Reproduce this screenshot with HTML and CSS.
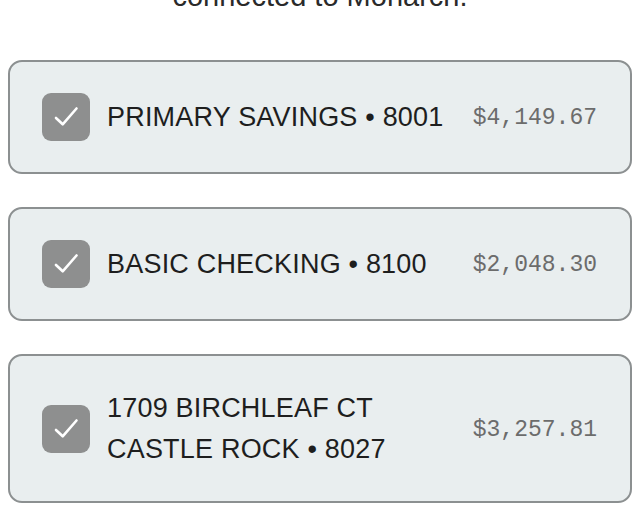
FILE: index.html
```html
<!DOCTYPE html>
<html>
<head>
<meta charset="utf-8">
<link rel="stylesheet" href="styles.css">
</head>
<body>
<div class="page">
  <p class="intro">connected to Monarch.</p>
  <div class="list">
    <div class="card">
      <span class="check"><svg viewBox="0 0 48 48" width="48" height="48"><polyline points="14,25 20.7,31.3 34.5,15.5" fill="none" stroke="#fff" stroke-width="2.6" stroke-linecap="round" stroke-linejoin="round"/></svg></span>
      <div class="name"><div>PRIMARY SAVINGS • 8001</div></div>
      <div class="amount">$4,149.67</div>
    </div>
    <div class="card">
      <span class="check"><svg viewBox="0 0 48 48" width="48" height="48"><polyline points="14,25 20.7,31.3 34.5,15.5" fill="none" stroke="#fff" stroke-width="2.6" stroke-linecap="round" stroke-linejoin="round"/></svg></span>
      <div class="name"><div>BASIC CHECKING • 8100</div></div>
      <div class="amount">$2,048.30</div>
    </div>
    <div class="card">
      <span class="check"><svg viewBox="0 0 48 48" width="48" height="48"><polyline points="14,25 20.7,31.3 34.5,15.5" fill="none" stroke="#fff" stroke-width="2.6" stroke-linecap="round" stroke-linejoin="round"/></svg></span>
      <div class="name"><div>1709 BIRCHLEAF CT</div><div>CASTLE ROCK • 8027</div></div>
      <div class="amount">$3,257.81</div>
    </div>
  </div>
</div>
</body>
</html>
```

FILE: styles.css
```css
html, body {
  margin: 0;
  padding: 0;
  background: #ffffff;
}
.page {
  padding: 0 10px 0 8px;
  font-family: "Liberation Sans", Arial, sans-serif;
}
.intro {
  margin: -22px 0 46px 0;
  font-size: 29px;
  line-height: 36px;
  color: #2a2a2a;
  text-align: center;
}
.list {
  display: flex;
  flex-direction: column;
  gap: 33px;
}
.card {
  display: flex;
  align-items: center;
  border: 2px solid #8c9091;
  border-radius: 14px;
  background: #e9eeef;
  padding: 31px 33px 31px 32px;
}
.check {
  flex: none;
  width: 48px;
  height: 48px;
  border-radius: 9px;
  background: #8e8f8f;
  display: block;
}
.check svg {
  display: block;
}
.name {
  flex: 1;
  margin-left: 17px;
  font-size: 27px;
  letter-spacing: 0.2px;
  line-height: 41px;
  color: #1e1e1e;
  padding-top: 1px;
}
.amount {
  flex: none;
  font-family: "Liberation Mono", "DejaVu Sans Mono", monospace;
  font-size: 23px;
  color: #6c6c6c;
  padding-top: 2px;
}
```
